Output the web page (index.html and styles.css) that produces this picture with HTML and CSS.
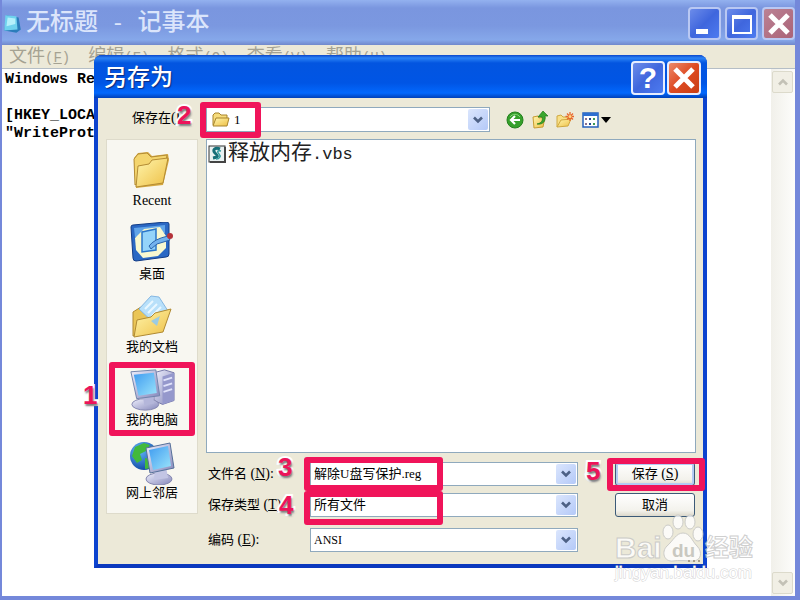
FILE: index.html
```html
<!DOCTYPE html>
<html lang="zh-CN">
<head>
  <meta charset="UTF-8">
  <meta name="viewport" content="width=device-width, initial-scale=1.0">
  <title>无标题 - 记事本</title>
  <link rel="stylesheet" href="styles.css">
</head>
<body>
  <svg width="0" height="0" class="defs" aria-hidden="true">
    <defs>
      <linearGradient id="gold" x1="0" y1="0" x2="1" y2="1">
        <stop offset="0" stop-color="#fff6ae"/>
        <stop offset="1" stop-color="#eebf45"/>
      </linearGradient>
      <linearGradient id="screen" x1="0" y1="0" x2="1" y2="1">
        <stop offset="0" stop-color="#3f9bf0"/>
        <stop offset="1" stop-color="#9be4fb"/>
      </linearGradient>
      <linearGradient id="metal" x1="0" y1="0" x2="1" y2="1">
        <stop offset="0" stop-color="#eeeffc"/>
        <stop offset="1" stop-color="#8587bb"/>
      </linearGradient>
      <radialGradient id="globe" cx="0.35" cy="0.3" r="0.8">
        <stop offset="0" stop-color="#63b8f7"/>
        <stop offset="1" stop-color="#0a3f9e"/>
      </radialGradient>
      <symbol id="chevron" viewBox="0 0 10 8">
        <path d="M1 1.5l4 4 4-4" fill="none" stroke="currentColor" stroke-width="2.6"/>
      </symbol>
      <symbol id="cross" viewBox="0 0 24 24">
        <path d="M3 3l18 18M21 3L3 21" stroke="#fff" stroke-width="5"/>
      </symbol>
    </defs>
  </svg>

  <div class="notepad">
    <div class="titlebar">
      <svg class="app-icon" viewBox="0 0 18 20">
        <path d="M4 2l11 2 2 11-4 3-11-2z" fill="#2b7dbb"/>
        <path d="M3 2l10 1 1 12-12 1z" fill="#6fd2ee"/>
        <path d="M5 4l7 1v5l-8 2z" fill="#b4f0fb"/>
      </svg>
      <h1>无标题<span class="half"> - </span>记事本</h1>
      <button class="win-btn" aria-label="最小化">
        <svg viewBox="0 0 24 24"><rect x="3" y="17" width="12" height="5" fill="#fff"/></svg>
      </button>
      <button class="win-btn" aria-label="最大化">
        <svg viewBox="0 0 24 24"><path d="M3 4h18v17H3z" fill="none" stroke="#fff" stroke-width="2"/><path d="M2 3h20v4H2z" fill="#fff"/></svg>
      </button>
      <button class="win-btn close" aria-label="关闭"><svg><use href="#cross"/></svg></button>
    </div>
    <div class="menubar">
      <span>文件<span class="half">(<u>F</u>)</span></span>
      <span>编辑<span class="half">(<u>E</u>)</span></span>
      <span>格式<span class="half">(<u>O</u>)</span></span>
      <span>查看<span class="half">(<u>V</u>)</span></span>
      <span>帮助<span class="half">(<u>H</u>)</span></span>
    </div>
    <div class="editor">
      <textarea aria-label="正文" spellcheck="false">Windows Registry

[HKEY_LOCAL_MACHINE
"WriteProtect"</textarea>
      <div class="scrollbar">
        <button class="scroll-btn up" aria-label="向上"><svg><use href="#chevron"/></svg></button>
        <button class="scroll-btn" aria-label="向下"><svg><use href="#chevron"/></svg></button>
      </div>
    </div>
  </div>

  <div class="dialog" role="dialog" aria-labelledby="dialogTitle">
    <div class="dialog-title">
      <h2 id="dialogTitle">另存为</h2>
      <button class="win-btn help" aria-label="帮助">?</button>
      <button class="win-btn close" aria-label="关闭"><svg><use href="#cross"/></svg></button>
    </div>

    <div class="dialog-body">
      <label class="look-label" for="lookIn">保存在<span class="key">(<u>I</u>):</span></label>
      <div class="look-row">
        <div class="combo look-in">
          <select id="lookIn"><option>1</option></select>
          <svg class="combo-icon" viewBox="0 0 18 16">
            <path d="M1 13V3l2-2h4l2 2h6v3" fill="#f6dc7c" stroke="#a8842c"/>
            <path d="M1 14L4 6h13l-2 8z" fill="url(#gold)" stroke="#a8842c"/>
          </svg>
          <span class="drop"><svg><use href="#chevron"/></svg></span>
          <span class="mark mark-look"></span>
          <span class="num num-2">2</span>
        </div>
        <div class="tools">
          <button aria-label="后退">
            <svg viewBox="0 0 18 18"><circle cx="9" cy="9" r="8" fill="#36a02b" stroke="#23801d"/><path d="M4 6a6 6 0 0 1 10 0" stroke="#86d67a" fill="none"/><path d="M14 9H5M9 5L5 9l4 4" fill="none" stroke="#fff" stroke-width="2.2"/></svg>
          </button>
          <button aria-label="向上一级">
            <svg viewBox="0 0 18 18"><path d="M2 6l5-1 1 2 6-1-2 10-9 1z" fill="url(#gold)" stroke="#c79b32"/><path d="M6 13c5-1 6-4 5-7H7l5-6 5 5h-3c1 5-2 9-8 8z" fill="#3aa62e" stroke="#1f7a1a" stroke-width="0.7"/></svg>
          </button>
          <button aria-label="新建文件夹">
            <svg viewBox="0 0 18 18"><path d="M1 16V5l4-1 2 2h6v3" fill="#f8e088" stroke="#cfa840"/><path d="M1 16l4-7 10-1-3 7z" fill="url(#gold)" stroke="#cfa840"/><path d="M14 1v9M9.500 5.500h9M11 2.500l6 6M17 2.500l-6 6" stroke="#e8672c" stroke-width="1.300"/><circle cx="14" cy="5.500" r="1.500" fill="#ffd884"/></svg>
          </button>
          <button class="views" aria-label="查看">
            <svg viewBox="0 0 30 18"><rect x="2" y="2" width="15" height="14" fill="#fff" stroke="#2461bd" stroke-width="1.500"/><path d="M2 2h15v3H2z" fill="#2e6fd0"/><path d="M4 7h2v2H4zM4 12h2v2H4z" fill="#8a7090"/><path d="M8 7h2v2H8zM8 12h2v2H8z" fill="#204a90"/><path d="M12 7h2v2h-2zM12 12h2v2h-2z" fill="#3d9a55"/><path d="M20 6h10l-5 6z" fill="#000"/></svg>
          </button>
        </div>
      </div>

      <div class="places">
        <button class="place">
          <svg viewBox="0 0 44 44">
            <path d="M6 39L4 9l4-5 10-1 4 4 16-2 1 6-6 25z" fill="#d6a840"/>
            <path d="M5 36L4 10l4-5 9-1 4 4 16-2-1 7z" fill="#f4d56e" stroke="#b48c34"/>
            <path d="M6 38l2-21 11-2 3-4 16-2-5 25z" fill="url(#gold)" stroke="#b48c34"/>
          </svg>
          <span class="key">Recent</span>
        </button>
        <button class="place">
          <svg viewBox="0 0 44 44">
            <path d="M1 5q0-2 2-2l33-3q3 0 3 2v30q0 3-3 3L6 39q-3 0-3-3z" fill="#2a68c4" stroke="#123c86"/>
            <path d="M4 6l31-3v8L5 15z" fill="#60a4e8"/>
            <path d="M5 16l9-9 16-2 6 9v12l-8 8-15 2-7-8z" fill="#f8f8d0"/>
            <path d="M12 10l14-3v21l-14 2z" fill="#94d4fa" stroke="#2a76ca" stroke-width="1.500"/>
            <path d="M19 24q5-7 19-10l2 4-13 4-6 5z" fill="#73b2ed" stroke="#2a64ac"/>
            <circle cx="40" cy="14" r="3" fill="#b4323a"/>
          </svg>
          <span>桌面</span>
        </button>
        <button class="place">
          <svg viewBox="0 0 44 44">
            <path d="M3 41V17l8-5 7 5 14-3-1 17z" fill="#eac556" stroke="#b08a32"/>
            <path d="M9 14L21 1l8 1 9 14-13 13z" fill="#b8e0fa" stroke="#85b7e2"/>
            <path d="M15 14l8-8M18 18l9-9M22 21l9-9" stroke="#e9f7ff" stroke-width="2"/>
            <path d="M4 42l3-17 14-3 4-4 16-4-8 23z" fill="url(#gold)" stroke="#b08a32"/>
            <path d="M21 26l9-5-3 10z" fill="#9bcbe2"/>
          </svg>
          <span>我的文档</span>
        </button>
        <button class="place">
          <svg viewBox="0 0 48 44">
            <path d="M26 4l11-3 10 3v29l-12 4-9-4z" fill="url(#metal)" stroke="#7375a8"/>
            <path d="M35 8v29l12-4V4z" fill="#9598cc"/>
            <path d="M36 12l9-3M36 18l9-3M36 24l9-3" stroke="#e0e2fa" stroke-width="2"/>
            <ellipse cx="17" cy="37" rx="14" ry="6" fill="url(#metal)" stroke="#8587b0"/>
            <path d="M14 26l11-2 1 12-10 2z" fill="#b4b6da"/>
            <path d="M2 3l26-2 4 27-24 3z" fill="url(#metal)" stroke="#6f82aa"/>
            <path d="M5 6l21-2 3 21-19 3z" fill="url(#screen)"/>
          </svg>
          <span>我的电脑</span>
          <span class="mark mark-place"></span>
          <span class="num num-1">1</span>
        </button>
        <button class="place">
          <svg viewBox="0 0 44 44">
            <circle cx="14" cy="15" r="14" fill="url(#globe)"/>
            <path d="M5 6l9-4 6 2-4 6-6 3 2 6-5 3-5-7zM15 17l8 2-2 8-6 1z" fill="#42b93c"/>
            <ellipse cx="29" cy="38" rx="13" ry="6" fill="url(#metal)" stroke="#8587b0"/>
            <path d="M25 27l11-2 2 12-14 2z" fill="#c3c5e4"/>
            <path d="M16 7l24-5 4 25-24 5z" fill="url(#metal)" stroke="#56709a"/>
            <path d="M19 9l19-4 3 20-18 4z" fill="url(#screen)"/>
          </svg>
          <span>网上邻居</span>
        </button>
      </div>

      <div class="main">
        <ul class="files">
          <li>
            <svg viewBox="0 0 18 18">
              <rect x="1" y="1" width="16" height="16" fill="#e9f1f1" stroke="#333"/>
              <path d="M17 2v15H2" fill="none" stroke="#444" stroke-width="2"/>
              <path d="M12 4c-5-2-8 1-5 4s4 4-2 5" fill="none" stroke="#176f78" stroke-width="3"/>
              <path d="M13 6c-4-1-4 1-2 3s1 5-3 5" fill="none" stroke="#2f9b9f" stroke-width="1.500"/>
            </svg>
            <span>释放内存<span class="half">.vbs</span></span>
          </li>
        </ul>

        <div class="form">
          <label for="fileName">文件名<span class="key"> (<u>N</u>):</span></label>
          <div class="combo">
            <input type="text" id="fileName" value="解除U盘写保护.reg">
            <span class="drop"><svg><use href="#chevron"/></svg></span>
            <span class="mark mark-name"></span>
            <span class="num num-3">3</span>
          </div>
          <div class="action">
            <button class="push default">保存<span class="key"> (<u>S</u>)</span></button>
            <span class="mark mark-save"></span>
            <span class="num num-5">5</span>
          </div>

          <label for="fileType">保存类型<span class="key"> (<u>T</u>)</span></label>
          <div class="combo">
            <select id="fileType"><option>所有文件</option></select>
            <span class="drop"><svg><use href="#chevron"/></svg></span>
            <span class="mark mark-type"></span>
            <span class="num num-4">4</span>
          </div>
          <div class="action"><button class="push">取消</button></div>

          <label class="last" for="encoding">编码<span class="key"> (<u>E</u>):</span></label>
          <div class="combo last">
            <select id="encoding" class="latin"><option>ANSI</option></select>
            <span class="drop"><svg><use href="#chevron"/></svg></span>
          </div>
        </div>
      </div>
    </div>
  </div>

  <svg class="watermark" viewBox="0 0 150 70" aria-label="Baidu 经验">
    <g class="wm-logo">
      <text x="1" y="43" font-size="30">Bai</text>
      <ellipse cx="54" cy="17" rx="5" ry="7"/>
      <ellipse cx="64" cy="7" rx="5" ry="7"/>
      <ellipse cx="76" cy="7" rx="5" ry="7"/>
      <ellipse cx="84" cy="19" rx="5" ry="7"/>
      <path d="M69 18c7 0 9 8 14 13 6 6 4 15-4 15-5 0-15-1-20 0-9 1-12-9-6-15 6-5 9-13 16-13z"/>
      <text x="91" y="41" font-size="24">经验</text>
    </g>
    <text x="58" y="42" font-size="19" class="wm-du">du</text>
    <path d="M74 45h2v2h-2zM79 45h2v2h-2zM84 45h2v2h-2z" fill="#a89c88"/>
    <text x="1" y="63" font-size="17" class="wm-url">jingyan.baidu.com</text>
  </svg>
</body>
</html>
```
FILE: styles.css
```css
* {
  box-sizing: border-box;
  margin: 0;
  padding: 0;
}

body {
  height: 100vh;
  overflow: hidden;
  position: relative;
  font-family: "Liberation Serif", "Noto Sans CJK SC", serif;
  font-size: 13px;
  line-height: 16px;
  color: #000;
}

button, input, select, textarea {
  font: inherit;
  color: inherit;
  border: none;
  background: none;
}

.defs {
  position: absolute;
}

.half {
  font-family: "Liberation Mono", monospace;
  white-space: pre;
}

.key {
  font-size: 14px;
}

/* Notepad window */
.notepad {
  height: 100%;
  display: flex;
  flex-direction: column;
  border: solid #7488da;
  border-width: 0 5px 4px 2px;
  background: #fff;
}

.titlebar {
  display: flex;
  align-items: center;
  gap: 4px;
  height: 45px;
  padding: 2px 0 0;
  background: linear-gradient(#93b1ef 0, #7a96df 8px, #7b98e0 26px, #86a8ea 40px, #7088cc 45px);
}

.app-icon {
  width: 20px;
  height: 22px;
}

h1 {
  flex: 1;
  font-size: 24px;
  line-height: 32px;
  font-weight: 500;
  color: #dbe5fb;
  white-space: nowrap;
}

h1 .half {
  font-size: 22px;
}

.win-btn {
  width: 33px;
  height: 33px;
  display: flex;
  align-items: center;
  justify-content: center;
  border: 2px solid #b9c8f3;
  border-radius: 4px;
  background: linear-gradient(135deg, #6c8cea, #3f66dd 50%, #4d7bf0);
}

.win-btn svg {
  width: 24px;
  height: 24px;
}

.notepad .close {
  background: linear-gradient(135deg, #bb8294, #ab6377);
}

.menubar {
  display: flex;
  gap: 18px;
  height: 24px;
  padding-left: 7px;
  background: #ece9d8;
  border-bottom: 1px solid #b5bec6;
  font-size: 18px;
  line-height: 23px;
  color: #a5a292;
  white-space: nowrap;
}

.menubar .half {
  font-size: 14px;
}

.editor {
  flex: 1;
  display: flex;
  min-height: 0;
}

textarea {
  flex: 1;
  padding: 2px 3px;
  resize: none;
  overflow: hidden;
  outline: none;
  font-family: "Liberation Mono", monospace;
  font-size: 15px;
  line-height: 18px;
  font-weight: bold;
}

.scrollbar {
  width: 24px;
  padding: 2px 2px 2px 1px;
  display: flex;
  flex-direction: column;
  justify-content: space-between;
  background: linear-gradient(90deg, #f1f0ea, #fdfdfb);
}

.scroll-btn {
  height: 22px;
  border: 1px solid #dcdacb;
  border-radius: 2px;
  background: #f1efe5;
  color: #c3c1b6;
}

.scroll-btn svg {
  width: 10px;
  height: 8px;
}

.scroll-btn.up svg {
  transform: rotate(180deg);
}

/* Save dialog */
.dialog {
  position: absolute;
  top: 55px;
  right: 93px;
  bottom: 32px;
  left: 94px;
  display: flex;
  flex-direction: column;
  border: solid #0c43cf;
  border-width: 0 4px 4px;
  border-bottom-color: #0a38be;
  border-radius: 8px 8px 0 0;
  background: #0c43cf;
}

.dialog-title {
  display: flex;
  align-items: center;
  gap: 2px;
  height: 43px;
  padding: 3px 6px 0 10px;
  margin: 0 -4px;
  border-radius: 8px 8px 0 0;
  background: linear-gradient(#0a46cb 0, #2b83f6 3px, #0355e0 8px, #0055e5 28px, #0268fd 38px, #0040b8 43px);
}

h2 {
  flex: 1;
  font-size: 23px;
  line-height: 32px;
  font-weight: 500;
  color: #fff;
  text-shadow: 1px 1px 1px #0a2c80;
}

.dialog .win-btn {
  width: 34px;
  height: 34px;
  border-color: #e6edff;
}

.dialog .close {
  background: linear-gradient(135deg, #ec8a6a, #de4a22 50%, #c83e14);
}

.help {
  font-family: "Liberation Sans", sans-serif;
  font-size: 30px;
  font-weight: bold;
  color: #fff;
}

.dialog-body {
  flex: 1;
  min-height: 0;
  display: grid;
  grid-template-columns: 92px 1fr;
  grid-template-rows: 25px 1fr;
  gap: 7px 8px;
  padding: 9px 7px 12px 8px;
  background: #ece9d8;
}

.look-label {
  padding-left: 26px;
  line-height: 22px;
  white-space: nowrap;
}

.look-row {
  display: flex;
  align-items: center;
  gap: 16px;
}

.look-in {
  flex: 0 1 284px;
}

.look-row .combo {
  height: 25px;
}

.combo {
  position: relative;
  display: flex;
  height: 24px;
  padding: 1px;
  border: 1px solid #8fa9bd;
  background: #fff;
}

.combo input, .combo select {
  flex: 1;
  min-width: 0;
  padding-left: 2px;
  appearance: none;
  outline: none;
}

.look-in select {
  padding-left: 26px;
}

.combo .latin {
  font-size: 12px;
}

.combo-icon {
  position: absolute;
  top: 4px;
  left: 5px;
  width: 18px;
  height: 16px;
}

.drop {
  width: 20px;
  display: flex;
  align-items: center;
  justify-content: center;
  border-radius: 2px;
  background: linear-gradient(135deg, #dbe6fd, #b4c9f8);
  color: #4d6185;
  pointer-events: none;
}

.drop svg {
  width: 10px;
  height: 8px;
}

.tools {
  display: flex;
  gap: 7px;
}

.tools button {
  height: 18px;
}

.tools svg {
  display: block;
  width: 18px;
  height: 18px;
}

.tools .views svg {
  width: 30px;
}

.places {
  align-self: start;
  display: flex;
  flex-direction: column;
  align-items: center;
  gap: 13px;
  padding: 9px 0 12px;
  border: 1px solid #dedbcb;
  background: #f8f7f1;
}

.place {
  position: relative;
  display: flex;
  flex-direction: column;
  align-items: center;
  white-space: nowrap;
}

.place svg {
  width: 46px;
  height: 44px;
}

.main {
  display: flex;
  flex-direction: column;
  gap: 9px;
  min-width: 0;
}

.files {
  flex: 1;
  list-style: none;
  border: 1px solid #8fa9bd;
  background: #fff;
}

.files li {
  display: flex;
  align-items: center;
  gap: 2px;
  padding: 0 1px;
  font-size: 21px;
  line-height: 24px;
  color: #222;
}

.files .half {
  font-size: 17px;
}

.files svg {
  width: 18px;
  height: 18px;
}

.form {
  display: grid;
  grid-template-columns: 102px 1fr 80px;
  row-gap: 7px;
  padding: 0 1px 0 2px;
}

.form label {
  line-height: 24px;
  white-space: nowrap;
}

.form .last {
  margin-top: 4px;
}

.form .combo {
  margin-right: 37px;
}

.action {
  position: relative;
}

.push {
  width: 100%;
  height: 24px;
  border: 1px solid #3c5a78;
  border-radius: 3px;
  background: linear-gradient(#fff, #f3f2ec 75%, #dcd8cb);
}

.push.default {
  box-shadow: inset 0 0 0 2px #b4cbf4;
}

/* Step highlights */
.mark {
  position: absolute;
  z-index: 1;
  border: 6px solid #f0145a;
  border-radius: 3px;
  pointer-events: none;
}

.mark-look {
  top: -6px;
  left: -7px;
  width: 61px;
  height: 36px;
}

.mark-place {
  top: -6px;
  left: 50%;
  width: 86px;
  height: 74px;
  margin-left: -43px;
}

.mark-name {
  top: -6px;
  left: -7px;
  width: 139px;
  height: 34px;
}

.mark-type {
  top: -3px;
  left: -7px;
  width: 139px;
  height: 34px;
}

.mark-save {
  top: -4px;
  left: -8px;
  width: 98px;
  height: 33px;
}

.num {
  position: absolute;
  z-index: 2;
  font-family: "Liberation Sans", sans-serif;
  font-size: 26px;
  line-height: 26px;
  font-weight: bold;
  color: #ec145a;
  -webkit-text-stroke: 4px #fff;
  paint-order: stroke fill;
  text-shadow: 1px 2px 2px #777;
  pointer-events: none;
}

.num-1 {
  top: 14px;
  left: -43px;
}

.num-2 {
  top: -6px;
  left: -30px;
}

.num-3 {
  top: -9px;
  left: -33px;
}

.num-4 {
  top: -2px;
  left: -32px;
}

.num-5 {
  top: -4px;
  left: -29px;
}

.watermark {
  position: absolute;
  right: 36px;
  bottom: 15px;
  width: 150px;
  height: 70px;
  z-index: 3;
  overflow: visible;
  font-family: "Liberation Sans", "Noto Sans CJK SC", sans-serif;
  font-weight: bold;
  pointer-events: none;
}

.wm-logo {
  fill: #fff;
  stroke: #c4c4c4;
  stroke-width: 1px;
  opacity: 0.8;
}

.wm-du {
  fill: #c9c8c0;
}

.wm-url {
  font-weight: normal;
  fill: #fff;
  stroke: #d2d2d2;
  stroke-width: 1px;
  paint-order: stroke fill;
}
```
